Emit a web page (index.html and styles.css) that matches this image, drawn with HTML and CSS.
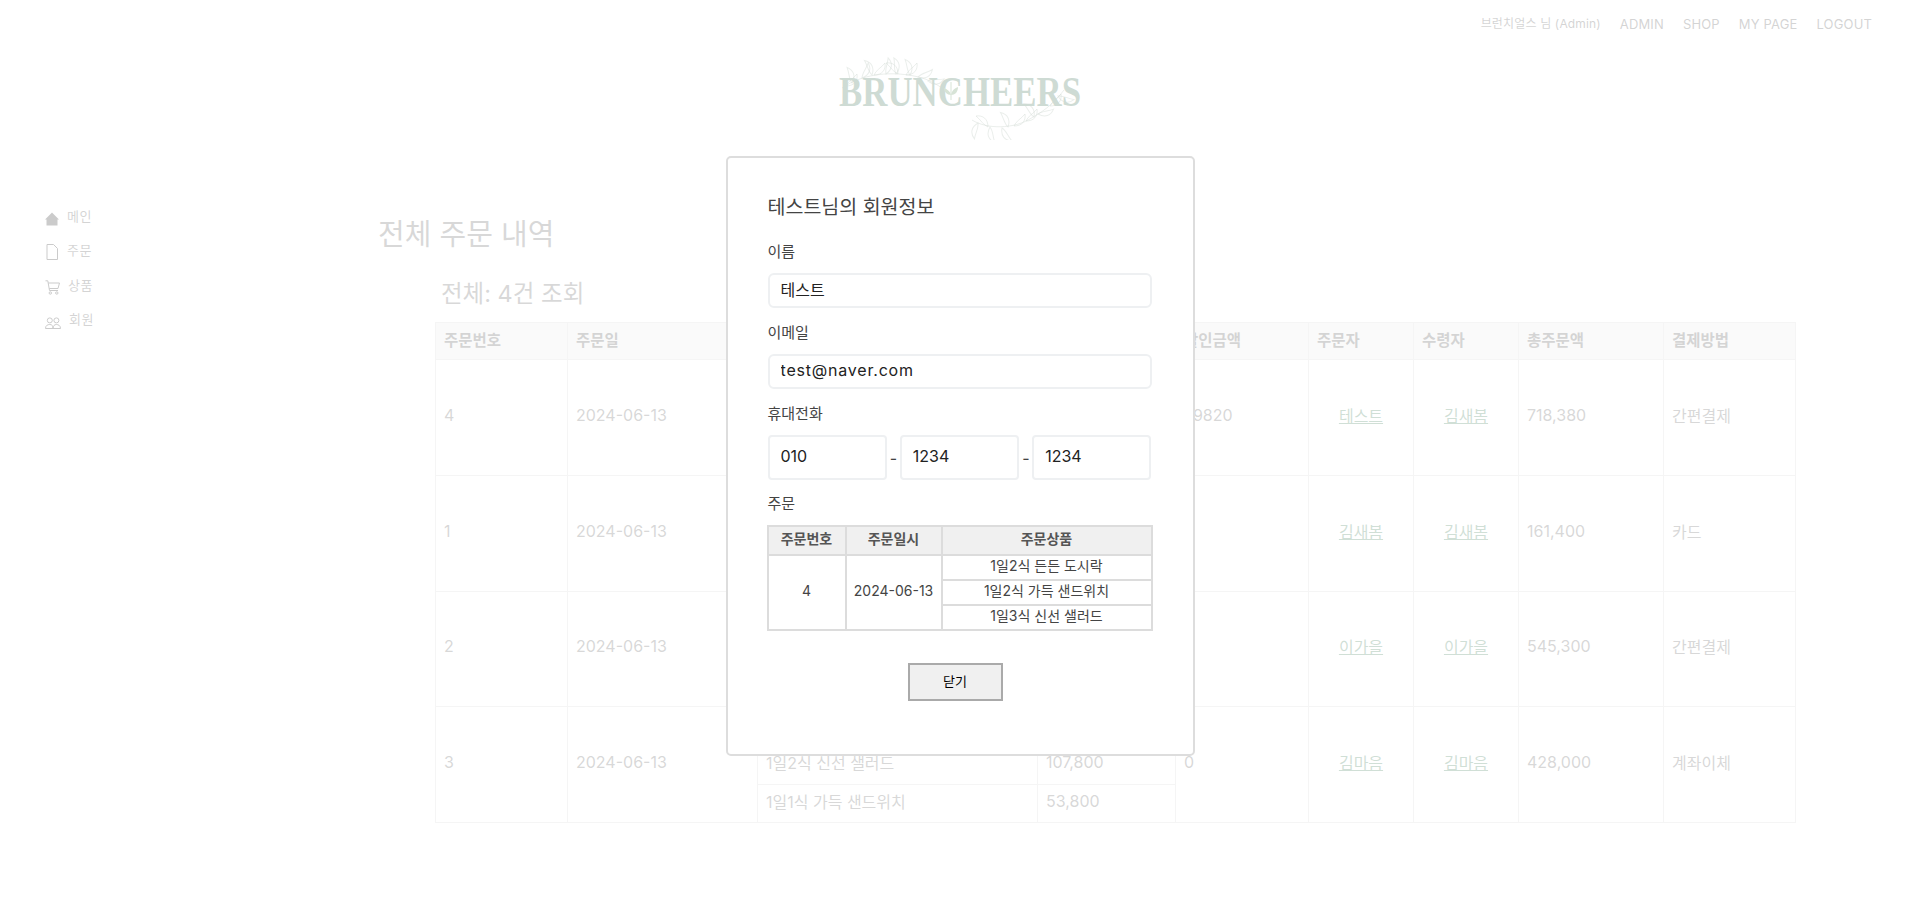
FILE: index.html
```html
<!DOCTYPE html>
<html lang="ko">
<head>
    <meta charset="UTF-8">
    <title>BRUNCHEERS</title>
    <link rel="stylesheet" href="styles.css">
</head>
<body>
    <nav class="top-nav">
        <span class="user-name">브런치얼스 님 (Admin)</span>
        <a href="#">ADMIN</a>
        <a href="#">SHOP</a>
        <a href="#">MY PAGE</a>
        <a href="#">LOGOUT</a>
    </nav>

    <div class="logo-box">
        <a href="#" class="logo">
            <svg class="logo-leaves" viewBox="0 0 240 90" width="240" height="90" fill="none" stroke="#5b7a64" stroke-width="1">
                <defs>
                    <path id="leaf" d="M0 0C2-5 7-7 11-12C12-5 8 0 0 0Z"/>
                </defs>
                <path d="M4 38C24 24 50 22 70 25C84 27 92 30 104 38"/>
                <path d="M134 70C150 80 176 78 190 70C204 62 214 56 226 40"/>
                <use href="#leaf" x="8" y="36"/><use href="#leaf" x="24" y="28" transform="rotate(-20 24 28)"/>
                <use href="#leaf" x="36" y="25"/><use href="#leaf" x="48" y="24" transform="rotate(-35 48 24)"/>
                <use href="#leaf" x="58" y="24" transform="rotate(-50 58 24)"/><use href="#leaf" x="68" y="25"/>
                <use href="#leaf" x="80" y="27" transform="rotate(20 80 27)"/><use href="#leaf" x="90" y="31" transform="rotate(40 90 31)"/>
                <use href="#leaf" x="34" y="25" transform="rotate(-70 34 25)"/><use href="#leaf" x="60" y="24" transform="rotate(-90 60 24)"/>
                <use href="#leaf" x="14" y="33" transform="rotate(-60 14 33)"/><use href="#leaf" x="72" y="25" transform="rotate(-60 72 25)"/>
                <use href="#leaf" x="140" y="73" transform="rotate(150 140 73)"/><use href="#leaf" x="152" y="77" transform="rotate(120 152 77)"/>
                <use href="#leaf" x="164" y="78" transform="rotate(100 164 78)"/><use href="#leaf" x="176" y="76"/>
                <use href="#leaf" x="188" y="71"/><use href="#leaf" x="200" y="64" transform="rotate(30 200 64)"/>
                <use href="#leaf" x="212" y="56"/><use href="#leaf" x="220" y="46" transform="rotate(60 220 46)"/>
                <use href="#leaf" x="170" y="77" transform="rotate(-70 170 77)"/><use href="#leaf" x="150" y="77" transform="rotate(-90 150 77)"/>
                <use href="#leaf" x="196" y="67" transform="rotate(-80 196 67)"/>
            </svg>
            <span class="logo-text">BRUNCHEERS</span>
            <svg class="logo-sprout" viewBox="0 0 14 24" width="14" height="24" fill="#5f8f5c">
                <path d="M7 24V6" stroke="#5f8f5c" fill="none"/>
                <path d="M7 19C8 14 11 12 14 11C14 16 11 19 7 19Z"/>
                <path d="M7 19C6 15 3 13 0 12C0 16 3 19 7 19Z"/>
            </svg>
        </a>
    </div>

    <div class="wrap">
        <ul class="side-menu">
            <li>
                <svg viewBox="0 0 14 14" width="14" height="14" fill="#333"><path d="M7 .5 0 7.5 1.5 7.5V13.5H12.5V7.5H14Z"/></svg>
                <a href="#">메인</a>
            </li>
            <li>
                <svg viewBox="0 0 14 16" width="14" height="16" fill="none" stroke="#333"><path d="M2 .5H8.5L12.5 4.5V15.5H2Z"/></svg>
                <a href="#">주문</a>
            </li>
            <li>
                <svg viewBox="0 0 15 15" width="15" height="15" fill="none" stroke="#333"><path d="M.5 .8H2.8L4.5 10.5H13M3.2 3H14.5L13 8.5H4.2"/><circle cx="5.3" cy="13" r="1.2"/><circle cx="11.8" cy="13" r="1.2"/></svg>
                <a href="#">상품</a>
            </li>
            <li>
                <svg viewBox="0 0 16 12" width="16" height="12" fill="none" stroke="#333"><circle cx="4.8" cy="3.4" r="2.5"/><circle cx="11.4" cy="3.4" r="2.5"/><path d="M.5 11.5C.5 8.5 2.5 7.5 4.8 7.5S8 8.8 8 11.5ZM8 11.5C8 8.8 9.5 7.5 11.4 7.5S15.5 8.5 15.5 11.5Z"/></svg>
                <a href="#">회원</a>
            </li>
        </ul>

        <main class="content">
            <h2 class="page-title">전체 주문 내역</h2>
            <h3 class="count">전체: 4건 조회</h3>
            <table class="order-table">
                <colgroup>
                    <col class="c1"><col class="c2"><col class="c3"><col class="c4"><col class="c5">
                    <col class="c6"><col class="c6"><col class="c7"><col class="c8">
                </colgroup>
                <thead>
                    <tr>
                        <th>주문번호</th><th>주문일</th><th></th><th></th><th>할인금액</th>
                        <th>주문자</th><th>수령자</th><th>총주문액</th><th>결제방법</th>
                    </tr>
                </thead>
                <tbody>
                    <tr>
                        <td rowspan="3">4</td><td rowspan="3">2024-06-13</td>
                        <td></td><td></td><td rowspan="3">79820</td>
                        <td rowspan="3" class="name"><a href="#">테스트</a></td>
                        <td rowspan="3" class="name"><a href="#">김새봄</a></td>
                        <td rowspan="3">718,380</td><td rowspan="3">간편결제</td>
                    </tr>
                    <tr><td></td><td></td></tr>
                    <tr><td></td><td></td></tr>
                    <tr>
                        <td rowspan="3">1</td><td rowspan="3">2024-06-13</td>
                        <td></td><td></td><td rowspan="3"></td>
                        <td rowspan="3" class="name"><a href="#">김새봄</a></td>
                        <td rowspan="3" class="name"><a href="#">김새봄</a></td>
                        <td rowspan="3">161,400</td><td rowspan="3">카드</td>
                    </tr>
                    <tr><td></td><td></td></tr>
                    <tr><td></td><td></td></tr>
                    <tr>
                        <td rowspan="3">2</td><td rowspan="3">2024-06-13</td>
                        <td></td><td></td><td rowspan="3"></td>
                        <td rowspan="3" class="name"><a href="#">이가을</a></td>
                        <td rowspan="3" class="name"><a href="#">이가을</a></td>
                        <td rowspan="3">545,300</td><td rowspan="3">간편결제</td>
                    </tr>
                    <tr><td></td><td></td></tr>
                    <tr><td></td><td></td></tr>
                    <tr>
                        <td rowspan="3">3</td><td rowspan="3">2024-06-13</td>
                        <td></td><td></td><td rowspan="3">0</td>
                        <td rowspan="3" class="name"><a href="#">김마음</a></td>
                        <td rowspan="3" class="name"><a href="#">김마음</a></td>
                        <td rowspan="3">428,000</td><td rowspan="3">계좌이체</td>
                    </tr>
                    <tr><td>1일2식 신선 샐러드</td><td>107,800</td></tr>
                    <tr><td>1일1식 가득 샌드위치</td><td>53,800</td></tr>
                </tbody>
            </table>
        </main>
    </div>

    <div class="modal-bg">
        <div class="modal">
            <h3 class="modal-title">테스트님의 회원정보</h3>

            <label class="field-label" for="userName">이름</label>
            <input class="field" id="userName" value="테스트">

            <label class="field-label" for="userEmail">이메일</label>
            <input class="field email" id="userEmail" value="test@naver.com">

            <label class="field-label" for="phone1">휴대전화</label>
            <div class="phone-row">
                <input class="field phone" id="phone1" value="010">
                <span>-</span>
                <input class="field phone" value="1234">
                <span>-</span>
                <input class="field phone" value="1234">
            </div>

            <div class="field-label">주문</div>
            <table class="mini-table">
                <colgroup><col class="m1"><col class="m2"><col></colgroup>
                <thead>
                    <tr><th>주문번호</th><th>주문일시</th><th>주문상품</th></tr>
                </thead>
                <tbody>
                    <tr><td rowspan="3">4</td><td rowspan="3">2024-06-13</td><td>1일2식 든든 도시락</td></tr>
                    <tr><td>1일2식 가득 샌드위치</td></tr>
                    <tr><td>1일3식 신선 샐러드</td></tr>
                </tbody>
            </table>

            <div class="btn-row">
                <button class="close-btn">닫기</button>
            </div>
        </div>
    </div>
</body>
</html>
```

FILE: styles.css
```css
* {
    box-sizing: border-box;
}

body {
    margin: 0;
    font-family: Inter, "Noto Sans CJK KR", sans-serif;
    color: #646464;
    background: #fff;
}

a {
    color: inherit;
    text-decoration: none;
}

.top-nav {
    display: flex;
    justify-content: flex-end;
    gap: 19px;
    height: 46px;
    padding: 16px 48px 0 0;
    font-size: 13px;
    line-height: 16px;
    letter-spacing: .15px;
    color: #555;
}

.user-name {
    font-size: 12px;
}

.logo-box {
    display: flex;
    justify-content: center;
    height: 104px;
}

.logo {
    position: relative;
    display: block;
    width: 240px;
    height: 90px;
    margin: 4px 0 0 -4px;
}

.logo-leaves {
    position: absolute;
    left: 0;
    top: 0;
    stroke-opacity: .5;
}

.logo-text {
    position: absolute;
    left: 1px;
    top: 19px;
    width: 280px;
    font-family: "Liberation Serif", serif;
    font-weight: 700;
    font-size: 42px;
    line-height: 46px;
    color: #3f7053;
    transform: scaleX(.83);
    transform-origin: left top;
    white-space: nowrap;
}

.logo-sprout {
    position: absolute;
    left: 106px;
    top: 26px;
}

.wrap {
    display: flex;
}

.side-menu {
    width: 378px;
    margin: 0;
    padding: 43px 0 0 45px;
    list-style: none;
    font-size: 13px;
    letter-spacing: .5px;
}

.side-menu li {
    display: flex;
    align-items: flex-end;
    gap: 8px;
    height: 34.6px;
    line-height: 20px;
    color: #555;
}

.side-menu svg {
    flex: none;
    margin-bottom: 2px;
}

.side-menu a {
    padding-bottom: 2px;
}

.content {
    width: 1360px;
    padding-top: 65px;
}

.page-title {
    margin: 0;
    font-size: 29px;
    line-height: 40px;
    font-weight: 400;
    color: #666;
}

.count {
    margin: 24px 0 0 63px;
    font-size: 23.5px;
    line-height: 30px;
    font-weight: 400;
    color: #666;
}

.order-table {
    table-layout: fixed;
    width: 1360px;
    margin: 13px 0 0 57px;
    border-collapse: collapse;
    font-size: 16px;
}

.c1 { width: 132px; }
.c2 { width: 190px; }
.c3 { width: 280px; }
.c4 { width: 138px; }
.c5 { width: 133px; }
.c6 { width: 105px; }
.c7 { width: 145px; }
.c8 { width: 132px; }

.order-table th,
.order-table td {
    border: 1px solid #d8d8d8;
    padding: 0 8px 5px;
    text-align: left;
}

.order-table th {
    height: 37px;
    background: #ececec;
    font-size: 15.5px;
    font-weight: 700;
    color: #555;
}

.order-table td {
    height: 38.6px;
}

.order-table .name {
    text-align: center;
}

.name a {
    color: #44805c;
    text-decoration: underline;
}

.modal-bg {
    position: fixed;
    inset: 0;
    display: flex;
    align-items: center;
    justify-content: center;
    background: rgba(255, 255, 255, .75);
}

.modal {
    width: 469px;
    height: 600px;
    padding: 36px 41px 0 40px;
    background: #fff;
    border: 2px solid #ddd;
    border-radius: 5px;
    color: #444;
}

.modal-title {
    margin: 0 0 21px;
    font-size: 19.5px;
    line-height: 26px;
    font-weight: 400;
}

.field-label {
    display: block;
    margin-bottom: 10px;
    font-size: 15px;
    line-height: 22px;
}

.field {
    display: block;
    width: 100%;
    height: 35px;
    margin-bottom: 14px;
    padding: 0 11px 4px;
    border: 2px solid #eef0f2;
    border-radius: 6px;
    font: inherit;
    font-size: 16px;
    color: #222;
}

.field.email {
    letter-spacing: .8px;
}

.phone-row {
    display: flex;
    align-items: center;
    gap: 3px;
    margin-bottom: 13px;
}

.phone-row span {
    width: 7px;
    text-align: center;
}

.field.phone {
    flex: 1;
    min-width: 0;
    height: 45px;
    margin: 0;
    border-radius: 4px;
}

.mini-table {
    table-layout: fixed;
    width: 386px;
    margin: 1px 0 0 -1px;
    border-collapse: collapse;
    font-size: 14px;
    line-height: 20px;
    text-align: center;
}

.m1 { width: 78px; }
.m2 { width: 96px; }

.mini-table th,
.mini-table td {
    border: 2px solid #dcdcdc;
    padding: 0 0 3px;
}

.mini-table th {
    height: 29px;
    background: #f0f0f0;
    font-weight: 600;
    color: #555;
}

.mini-table td {
    height: 24px;
}

.btn-row {
    display: flex;
    justify-content: center;
    padding: 32px 9px 0 0;
}

.close-btn {
    width: 95px;
    height: 38px;
    padding: 0 0 4px;
    border: 2px solid #aaa;
    background: #f0f0f0;
    font: inherit;
    font-size: 13px;
    color: #000;
}
```
